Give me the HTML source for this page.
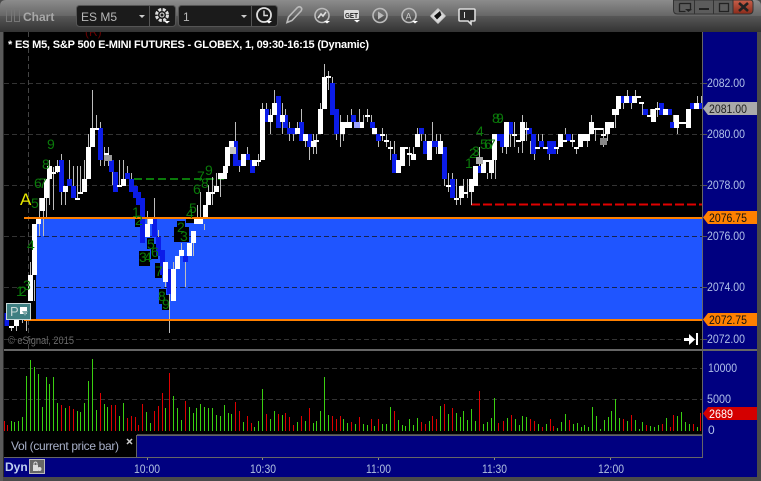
<!DOCTYPE html>
<html><head><meta charset="utf-8"><style>
html,body{margin:0;padding:0;background:#444;width:761px;height:481px;overflow:hidden}
svg{display:block;font-family:"Liberation Sans",sans-serif}
</style></head><body>
<svg width="761" height="481" viewBox="0 0 761 481" xmlns="http://www.w3.org/2000/svg">
<defs>
<linearGradient id="tb" x1="0" y1="0" x2="0" y2="1">
<stop offset="0" stop-color="#8c8c8c"/><stop offset=".5" stop-color="#666"/><stop offset=".5" stop-color="#575757"/><stop offset="1" stop-color="#333"/>
</linearGradient>
<linearGradient id="cl" x1="0" y1="0" x2="0" y2="1"><stop offset="0" stop-color="#c9604a"/><stop offset="1" stop-color="#8a2a1a"/></linearGradient>
<clipPath id="plot"><rect x="4" y="32" width="698" height="317"/></clipPath>
</defs>
<rect width="761" height="481" fill="#4a4a4a"/>
<rect x="0" y="32" width="3" height="449" fill="#5a5a5a"/>
<rect x="3" y="32" width="1" height="445" fill="#2a2a2a"/>
<path d="M0 32V6Q0 0 6 0H755Q761 0 761 6V32Z" fill="url(#tb)"/>
<rect x="4" y="32" width="698" height="402" fill="#000"/>
<rect x="703" y="32" width="54" height="445" fill="#000080"/>
<rect x="4" y="458" width="753" height="19" fill="#000080"/>
<rect x="4" y="434" width="133" height="24" fill="#000"/>
<rect x="137" y="436" width="565" height="21" fill="#000080"/>

<!-- titlebar -->
<g fill="none" stroke="#777" stroke-width="1"><rect x="6.5" y="8.5" width="5" height="13"/><rect x="14.5" y="8.5" width="5" height="13"/></g>
<text x="23" y="21" font-size="12" font-weight="bold" fill="#a8a8a8">Chart</text>
<rect x="76.5" y="5.5" width="99" height="21" rx="3" fill="#1b1b1b" stroke="#555"/>
<rect x="178.5" y="5.5" width="99" height="21" rx="3" fill="#1b1b1b" stroke="#555"/>
<path d="M149.5 6V26M251.5 6V26" stroke="#555"/>
<text x="81" y="21" font-size="12" fill="#b8b8b8">ES M5</text>
<text x="183" y="21" font-size="12" fill="#b8b8b8">1</text>
<path d="M139 15h6l-3 3zM241 15h6l-3 3z" fill="#ccc"/>
<circle cx="162" cy="15" r="5.5" fill="none" stroke="#ddd" stroke-width="3" stroke-dasharray="3 1.4"/>
<circle cx="162" cy="15" r="2" fill="none" stroke="#ddd"/>
<circle cx="264" cy="15" r="7" fill="none" stroke="#ddd" stroke-width="1.8"/>
<path d="M264 10.5V15.5H268" fill="none" stroke="#ddd" stroke-width="1.4"/>
<path d="M164 21h6l-3 2.5zM266 21h6l-3 2.5z" fill="#fff"/>
<g fill="none" stroke="#bbb" stroke-width="1.6">
<path d="M287 23l1.5-5.5 9-9.5q2-1.5 3.5 0t0 3.5l-9 9.5z" transform="translate(0,-.5)"/>
<circle cx="322" cy="15.5" r="7"/>
<path d="M318 18l3-4 2 2 3-4" stroke="#ddd"/>
<circle cx="380" cy="15.5" r="7"/>
<circle cx="409" cy="15.5" r="7"/>
</g>
<path d="M378 11.5l6 4-6 4z" fill="#bbb"/>
<text x="405.5" y="19.5" font-size="9" fill="#ccc">A</text>
<path d="M324 21h6l-3 2.5zM412 21h6l-3 2.5zM354 20h6l-3 2.5z" fill="#fff"/>
<rect x="344" y="10" width="15" height="9" rx="1.5" fill="#ddd"/>
<text x="345" y="18" font-size="7.5" font-weight="bold" fill="#222" textLength="13" lengthAdjust="spacingAndGlyphs">GET</text>
<path d="M431 16l7-7 7 7-7 7z" fill="#ddd" stroke="#ccc" stroke-width="1.5" stroke-linejoin="round"/>
<path d="M434 16l6-5 1.5 4-4.5 4.5z" fill="#111"/>
<path d="M460 9h14q1 0 1 1v10q0 1-1 1h-3v3l-3-3h-8q-1 0-1-1V10q0-1 1-1z" fill="#2a2a2a" stroke="#ddd" stroke-width="1.6"/>
<path d="M464.5 12v6" stroke="#ddd"/>
<!-- window buttons -->
<path d="M673.5 0V10q0 4 4 4H733V0Z" fill="#5c5c5c" stroke="#333"/>
<path d="M733 0H750q3 0 3 3V10q0 4-4 4H733Z" fill="url(#cl)" stroke="#333"/>
<path d="M694.5 0V14M713.5 0V14" stroke="#333"/>
<path d="M679.5 3.5h11v7" fill="none" stroke="#222" stroke-width="1.3"/><path d="M679.5 3.5v8h6" fill="none" stroke="#222" stroke-width="1.3"/>
<path d="M685 9h7l-3.500 3z" fill="#222"/>
<rect x="699" y="8" width="10" height="2" fill="#222"/>
<rect x="719.5" y="3.5" width="9" height="8" fill="none" stroke="#222" stroke-width="1.3"/>
<path d="M739 3l9 8M748 3l-9 8" stroke="#222" stroke-width="2.6"/>

<!-- panel fill -->
<rect x="36" y="218" width="666" height="102" fill="#1f55ff"/>

<!-- grid -->
<g stroke="#333" stroke-dasharray="5 3" shape-rendering="crispEdges">
<path d="M4 83.5H702M4 134.5H702M4 185.5H702M4 339.5H702"/>
<path d="M4 236.5H36M4 287.5H36"/>
<path d="M36 236.5H702M36 287.5H702" stroke="#15224f"/>
<path d="M4 368.5H702M4 399.5H702"/>
<path d="M28.5 32V349" stroke="#444"/>
</g>
<path d="M702 83.5h5M702 134.5h5M702 185.5h5M702 236.5h5M702 287.5h5M702 339.5h5" stroke="#555"/>

<path d="M134 179H224" stroke="#0a7a0a" stroke-width="2" stroke-dasharray="8 4"/>
<path d="M471 204.5H702" stroke="#e00000" stroke-width="2" stroke-dasharray="9 3"/>

<!-- number backgrounds -->
<g fill="#000">
<rect x="135" y="218" width="7" height="9"/><rect x="139" y="251" width="11" height="15"/><rect x="147" y="238" width="7" height="11"/><rect x="151" y="244" width="7" height="15"/><rect x="155" y="263" width="7" height="15"/><rect x="159" y="289" width="7" height="15"/><rect x="162" y="295" width="7" height="15"/><rect x="174" y="227" width="15" height="15"/><rect x="177" y="221" width="8" height="12"/><rect x="186" y="218" width="8" height="5"/>
</g>

<g clip-path="url(#plot)" transform="translate(.5,0)" shape-rendering="crispEdges">
<!-- wicks -->
<path fill="none" stroke="#bdbdbd" d="M11 326V331M16 320V331M22 307V323M26 303V331M30 262V301M34 280V301M39 198V236M43 198V236M46 185V217M49 160V205M53 167V210M57 160V173M61 154V205M65 192V205M69 160V179M73 166V186M77 166V198M80 166V192M84 160V179M88 134V147M92 90V128M96 115V128M100 122V166M104 147V166M108 147V166M112 172V185M115 185V192M119 160V185M123 160V179M127 166V173M131 173V179M147 211V224M154 198V218M158 230V237M165 262V287M169 269V333M173 262V269M181 243V250M185 262V287M193 243V256M197 205V218M200 192V224M204 224V230M208 185V205M212 177V205M216 173V192M220 177V197M226 147V166M235 122V141M239 166V172M247 147V154M254 166V173M258 154V166M262 103V109M266 103V109M270 109V134M274 90V103M282 103V134M285 109V115M289 122V141M293 134V141M297 122V128M301 109V122M305 141V147M309 134V160M313 134V154M316 134V154M320 103V109M324 64V77M328 71V90M332 77V83M336 134V140M340 115V147M343 134V141M347 115V122M351 109V122M355 122V128M359 109V122M363 115V122M367 109V122M371 115V122M378 141V147M382 128V141M386 134V147M390 141V160M394 141V154M409 147V166M413 147V154M417 128V134M421 134V141M425 134V141M432 122V141M436 134V154M440 134V141M444 179V186M448 173V192M452 173V179M456 179V205M460 198V205M463 179V186M467 179V198M471 192V205M479 147V166M487 173V179M491 173V179M495 160V179M502 147V153M506 147V154M510 134V147M514 122V147M518 147V153M522 115V153M526 122V141M530 141V154M534 154V160M538 134V141M542 134V141M549 154V160M557 147V154M565 128V134M572 134V147M576 147V154M583 134V141M587 141V147M591 115V122M595 128V141M603 128V147M607 134V141M615 115V128M623 103V109M627 90V96M631 103V109M635 90V96M642 103V115M650 109V115M657 102V117M673 115V122M677 128V134M697 96V103M701 96V103"/>
<!-- bodies -->
<g fill="none" stroke-width="5">
<path stroke="#0b1ce8" d="M6 313V326M61 160V192M69 179V186M73 186V198M100 128V160M111 160V172M115 172V192M127 173V179M131 179V192M135 186V198M138 192V205M142 198V243M154 218V237M158 237V256M162 250V275M169 269V294M185 256V262M235 141V166M239 160V166M247 154V160M252 160V173M266 109V122M278 96V128M285 115V128M289 128V134M293 128V134M301 122V141M309 134V147M332 83V115M336 109V134M353 115V122M372 122V128M378 134V141M394 154V173M421 128V134M425 141V154M432 141V147M436 141V147M444 147V179M452 179V198M479 166V173M498 134V141M502 134V147M510 122V134M529 128V134M533 134V154M541 141V147M549 141V154M553 141V154M568 134V141M622 96V103M630 96V103M645 109V115M661 103V115M669 109V115M672 122V128M692 103V109M700 103V109"/>
<path stroke="#fff" d="M11 326V328M16 320V326M23 307V314M30 275V301M34 224V275M38 218V224M42 198V211M46 179V198M49 166V179M53 172V174M57 166V172M65 186V192M77 198V200M80 192V194M84 179V192M88 147V179M92 128V147M96 128V130M106 153V155M119 185V187M123 179V186M147 224V237M150 218V224M165 262V282M173 269V301M177 256V269M181 250V256M189 243V256M193 231V243M196 218V224M200 218V224M205 205V218M208 192V205M212 192V194M216 186V192M220 173V179M224 173V179M225 166V173M227 147V166M231 141V147M243 154V166M254 160V166M258 160V162M262 109V160M270 115V122M274 103V115M282 115V122M297 128V134M305 134V141M313 141V147M316 140V142M320 109V134M324 77V109M328 76V78M342 122V134M346 122V128M349 122V128M356 122V128M361 122V128M367 115V117M374 128V134M382 134V136M386 140V142M390 147V149M398 160V173M402 147V166M405 147V149M409 153V155M413 154V160M417 134V147M429 141V160M440 141V154M448 185V187M456 198V200M461 186V198M465 192V194M471 179V192M475 166V186M483 160V173M487 160V162M491 160V173M494 134V160M506 122V147M514 134V136M518 140V142M522 122V141M526 128V130M537 147V149M545 147V149M556 147V149M560 134V147M564 140V142M572 140V142M576 147V149M580 134V147M584 134V141M587 134V141M591 122V134M596 128V130M600 128V130M603 134V136M607 122V134M611 122V128M614 109V115M616 109V115M618 96V109M626 96V103M634 96V103M638 96V98M641 102V104M649 115V117M653 109V122M657 108V110M665 109V115M676 115V128M681 122V124M684 122V124M688 109V128M696 103V109"/>
</g>
</g>
<!-- translucent squares -->
<g shape-rendering="crispEdges">
<rect x="104" y="155" width="8" height="6" fill="#9a9a9a"/>
<rect x="230" y="147" width="6" height="7" fill="#c4c4c4"/>
<rect x="354" y="122" width="6" height="6" fill="#9aa0ff"/>
<rect x="476" y="157" width="7" height="7" fill="#aaa"/>
<rect x="600" y="138" width="7" height="7" fill="#888"/>
</g>

<!-- orange lines -->
<rect x="24" y="217" width="678" height="2" fill="#ff8000"/>
<rect x="24" y="319" width="678" height="2" fill="#ff8000"/>

<!-- digits -->
<g font-size="14" fill="#0a7a0a">
<text x="47" y="149">9</text><text x="42" y="169">8</text><text x="34" y="188">6</text><text x="39" y="188">7</text><text x="31" y="208">5</text><text x="27" y="250">4</text><text x="23" y="290">3</text><text x="16" y="296">1</text><text x="19" y="296">2</text>
<text x="205" y="175">9</text><text x="197" y="181">7</text><text x="201" y="188">8</text><text x="193" y="194">6</text><text x="189" y="213">5</text><text x="186" y="218">4</text><text x="180" y="241">3</text><text x="177" y="232">2</text>
<text x="132" y="217">1</text><text x="135" y="225">2</text><text x="139" y="262">3</text><text x="144" y="262">4</text><text x="147" y="249">5</text><text x="151" y="257">6</text><text x="155" y="276">7</text><text x="158" y="301">8</text><text x="162" y="309">9</text>
<text x="492" y="123">8</text><text x="496" y="123">9</text><text x="476" y="136">4</text><text x="480" y="149">5</text><text x="484" y="149">6</text><text x="488" y="149">7</text><text x="472" y="156">3</text><text x="469" y="158">2</text><text x="465" y="168">1</text>
</g>
<text x="20" y="205" font-size="17" fill="#e8e800">A</text>
<g clip-path="url(#plot)"><text x="85" y="36" font-size="12" fill="#6a0000">(R)</text></g>
<text x="8" y="48" font-size="11" font-weight="bold" fill="#fff" textLength="361" lengthAdjust="spacing">* ES M5, S&amp;P 500 E-MINI FUTURES - GLOBEX, 1, 09:30-16:15 (Dynamic)</text>

<!-- P box -->
<rect x="6.5" y="303.5" width="24" height="16" fill="#3f7f82" stroke="#c8d8d8"/>
<text x="10" y="316" font-size="13" fill="#c8d8d8">P</text>
<path d="M20 307h7v7h-7z" fill="#fff"/>
<path d="M22 311h6l-3 5z" fill="#7fa8a8"/>
<text x="8" y="344" font-size="11" fill="#6a6a6a" textLength="66" lengthAdjust="spacingAndGlyphs">© eSignal, 2015</text>
<!-- arrow -->
<path d="M684 338h5v-4l6 5.5-6 5.500v-4h-5z" fill="#fff"/>
<rect x="696" y="333" width="2" height="12" fill="#fff"/>

<!-- panel lines -->
<g shape-rendering="crispEdges">
<rect x="702" y="32" width="1" height="426" fill="#666"/>
<rect x="4" y="349" width="753" height="2" fill="#666"/>
<rect x="137" y="435" width="566" height="1" fill="#666"/>
<rect x="136" y="435" width="1" height="22" fill="#666"/>
<rect x="4" y="457" width="699" height="1" fill="#666"/>
<path d="M147.5 458v2M262.5 458v2M378.5 458v2M494.5 458v2M610.5 458v2" stroke="#888"/>
</g>

<!-- volume -->
<g transform="translate(.5,0)" shape-rendering="crispEdges" fill="none">
<path stroke="#3ad010" d="M11 421V431M14 422V431M18 421V431M22 417V431M26 376V431M30 360V431M34 367V431M38 374V431M42 407V431M46 377V431M49 384V431M53 377V431M57 403V431M65 408V431M77 411V431M80 412V431M84 403V431M88 381V431M92 359V431M96 410V431M104 404V431M107 407V431M119 416V431M123 403V431M146 412V431M150 423V431M165 408V431M173 396V431M177 408V431M181 420V431M189 407V431M193 413V431M196 408V431M200 404V431M204 407V431M208 408V431M212 408V431M216 415V431M220 416V431M224 405V431M228 413V431M231 414V431M243 422V431M254 427V431M258 421V431M262 389V431M270 419V431M274 411V431M282 415V431M297 422V431M305 421V431M313 423V431M316 421V431M320 411V431M324 377V431M328 415V431M343 419V431M347 423V431M355 424V431M363 424V431M367 425V431M374 426V431M382 424V431M386 424V431M390 407V431M398 420V431M402 425V431M405 426V431M409 419V431M413 425V431M417 418V431M429 421V431M440 406V431M448 414V431M456 413V431M460 417V431M463 411V431M467 420V431M471 409V431M475 421V431M483 424V431M487 422V431M491 418V431M494 398V431M507 418V431M515 419V431M519 425V431M522 416V431M526 417V431M538 424V431M546 424V431M557 428V431M561 422V431M565 414V431M573 424V431M577 423V431M581 427V431M584 425V431M588 427V431M592 407V431M596 416V431M600 429V431M604 420V431M608 417V431M611 411V431M615 399V431M619 418V431M627 421V431M635 420V431M639 429V431M642 422V431M650 426V431M654 427V431M658 425V431M666 418V431M677 416V431M681 412V431M685 422V431M689 424V431M697 427V431"/>
<path stroke="#dd0000" d="M4 421V431M7 425V431M61 405V431M69 406V431M73 409V431M100 393V431M111 405V431M115 405V431M127 418V431M131 416V431M135 417V431M138 425V431M142 404V431M154 411V431M158 406V431M162 393V431M169 373V431M185 401V431M235 402V431M239 411V431M247 416V431M251 423V431M266 414V431M278 414V431M285 413V431M289 417V431M293 425V431M301 416V431M309 408V431M332 416V431M336 419V431M340 416V431M351 422V431M359 417V431M371 419V431M378 419V431M394 411V431M421 422V431M425 424V431M432 416V431M436 419V431M444 404V431M452 408V431M479 391V431M498 423V431M503 421V431M511 415V431M530 419V431M534 421V431M542 427V431M550 419V431M553 426V431M569 420V431M623 419V431M631 415V431M646 425V431M662 424V431M670 427V431M673 415V431M693 424V431M700 413V431"/>
</g>

<!-- axis labels -->
<g font-size="12" fill="#b0c0e8">
<text x="707" y="87" textLength="38" lengthAdjust="spacingAndGlyphs">2082.00</text>
<text x="707" y="138" textLength="38" lengthAdjust="spacingAndGlyphs">2080.00</text>
<text x="707" y="189" textLength="38" lengthAdjust="spacingAndGlyphs">2078.00</text>
<text x="707" y="240" textLength="38" lengthAdjust="spacingAndGlyphs">2076.00</text>
<text x="707" y="291" textLength="38" lengthAdjust="spacingAndGlyphs">2074.00</text>
<text x="707" y="343" textLength="38" lengthAdjust="spacingAndGlyphs">2072.00</text>
<text x="708" y="372" textLength="29" lengthAdjust="spacingAndGlyphs">10000</text>
<text x="707" y="403" textLength="24" lengthAdjust="spacingAndGlyphs">5000</text>
<text x="708" y="434">0</text>
</g>
<path d="M703 108.5l5-6.5h49v13h-49z" fill="#aaa"/>
<path d="M703 217.5l5-6.5h49v13h-49z" fill="#ff8000"/>
<path d="M703 319.5l5-6.5h49v13h-49z" fill="#ff8000"/>
<path d="M703 413.5l5-6.5h49v13h-49z" fill="#d40000"/>
<g font-size="12">
<text x="709" y="113" fill="#222" textLength="38" lengthAdjust="spacingAndGlyphs">2081.00</text>
<text x="709" y="222" fill="#111" textLength="38" lengthAdjust="spacingAndGlyphs">2076.75</text>
<text x="709" y="324" fill="#111" textLength="38" lengthAdjust="spacingAndGlyphs">2072.75</text>
<text x="709" y="418" fill="#fff" textLength="24" lengthAdjust="spacingAndGlyphs">2689</text>
</g>

<!-- bottom -->
<text x="11" y="450" font-size="12" fill="#a8b0c8" textLength="108">Vol (current price bar)</text>
<path d="M127 439l5 5M132 439l-5 5" stroke="#ccc" stroke-width="1.5"/>
<text x="5" y="471" font-size="12" font-weight="bold" fill="#c0d0f0">Dyn</text>
<rect x="29.5" y="459.5" width="15" height="14" fill="#666" stroke="#bbb"/>
<path d="M33 471v-6h5v6z" fill="#ddd"/><path d="M34 465v-2q1.5-2 3 0v2" fill="none" stroke="#ddd"/><circle cx="39.5" cy="469" r="2" fill="#ddd"/>
<g font-size="12" fill="#b0c0e0">
<text x="134" y="473" textLength="26" lengthAdjust="spacingAndGlyphs">10:00</text><text x="250" y="473" textLength="26" lengthAdjust="spacingAndGlyphs">10:30</text><text x="366" y="473" textLength="25" lengthAdjust="spacingAndGlyphs">11:00</text><text x="482" y="473" textLength="25" lengthAdjust="spacingAndGlyphs">11:30</text><text x="598" y="473" textLength="26" lengthAdjust="spacingAndGlyphs">12:00</text>
</g>
</svg>
</body></html>
